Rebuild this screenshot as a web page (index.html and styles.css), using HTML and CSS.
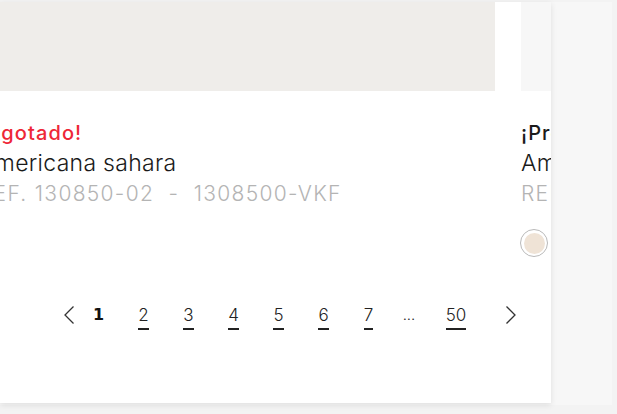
FILE: index.html
```html
<!DOCTYPE html>
<html lang="es">
<head>
<meta charset="utf-8">
<title>Productos</title>
<link rel="stylesheet" href="styles.css">
</head>
<body>
<div class="frame">
  <section class="viewport">
    <div class="track">
      <article class="card">
        <div class="media media-a"></div>
        <div class="info">
          <p class="status status-out">¡Agotado!</p>
          <p class="name">Americana sahara</p>
          <p class="ref">REF. 130850-02 &nbsp;- &nbsp;1308500-VKF</p>
        </div>
      </article>
      <article class="card">
        <div class="media media-b"></div>
        <div class="info">
          <p class="status">¡Promoción!</p>
          <p class="name">Americana natural</p>
          <p class="ref">REF. 130851-01</p>
          <span class="swatch"><span class="swatch-fill"></span></span>
        </div>
      </article>
    </div>
    <nav class="pager">
      <a class="pg-arrow" href="#" aria-label="Anterior">
        <svg width="12" height="20" viewBox="0 0 12 20"><polyline points="10.5,1.5 2,10 10.5,18.5" fill="none" stroke="#333" stroke-width="1.3"/></svg>
      </a>
      <span class="pg pg-current">1</span>
      <a class="pg" href="#"><span class="pg-num">2</span></a>
      <a class="pg" href="#"><span class="pg-num">3</span></a>
      <a class="pg" href="#"><span class="pg-num">4</span></a>
      <a class="pg" href="#"><span class="pg-num">5</span></a>
      <a class="pg" href="#"><span class="pg-num">6</span></a>
      <a class="pg" href="#"><span class="pg-num">7</span></a>
      <span class="pg pg-dots">...</span>
      <a class="pg pg-wide" href="#"><span class="pg-num">50</span></a>
      <a class="pg-arrow pg-next" href="#" aria-label="Siguiente">
        <svg width="12" height="20" viewBox="0 0 12 20"><polyline points="1.5,1.5 10,10 1.5,18.5" fill="none" stroke="#333" stroke-width="1.3"/></svg>
      </a>
    </nav>
  </section>
</div>
</body>
</html>
```

FILE: styles.css
```css
* { box-sizing: border-box; }
html, body { margin: 0; padding: 0; }
body {
  background: #f3f3f3;
  font-family: Inter, "Noto Sans", sans-serif;
  color: #222;
  width: 617px;
  height: 414px;
  overflow: hidden;
}
.frame {
  margin-top: 2px;
  width: 612px;
  height: 403px;
  background: #f7f7f7;
}
.viewport {
  width: 551px;
  height: 401px;
  background: #fff;
  overflow: hidden;
  box-shadow: 0 2px 6px rgba(0,0,0,0.10);
}
.track {
  display: flex;
  gap: 26px;
  margin-left: -21px;
}
.card {
  flex: 0 0 516px;
}
.media {
  height: 89px;
}
.media-a { background: #efedea; }
.media-b { background: #f7f7f7; }
.info {
  padding-top: 29px;
}
.info p { margin: 0; white-space: nowrap; }
.status {
  font-size: 20px;
  line-height: 26px;
  font-weight: 500;
  color: #1a1a1a;
  letter-spacing: 1.1px;
}
.status-out { color: #ee2737; }
.name {
  margin-top: 3px !important;
  font-size: 23px;
  line-height: 28px;
  font-weight: 300;
  color: #1a1a1a;
  letter-spacing: 0.3px;
}
.ref {
  margin-top: 3px !important;
  font-size: 21px;
  line-height: 28px;
  font-weight: 300;
  color: #b4b4b4;
  letter-spacing: 1.3px;
}
.swatch {
  display: inline-flex;
  align-items: center;
  justify-content: center;
  margin-top: 21px;
  width: 28px;
  height: 28px;
  border: 1px solid #b9b9b9;
  border-radius: 50%;
  background: #fff;
  margin-left: -1px;
}
.swatch-fill {
  width: 21px;
  height: 21px;
  border-radius: 50%;
  background: #efe3d6;
}
.pager {
  display: flex;
  align-items: center;
  margin-top: 44px;
  padding-left: 62px;
  height: 26px;
}
.pager a { color: #222; text-decoration: none; }
.pg-arrow {
  display: flex;
  width: 14px;
  justify-content: center;
}
.pg {
  width: 45px;
  text-align: center;
  font-size: 17px;
  font-weight: 300;
  line-height: 20px;
}
.pg-current {
  font-family: "DejaVu Sans", sans-serif;
  font-weight: 700;
  font-size: 16px;
  color: #111;
}
.pg-num {
  display: inline-block;
  padding-bottom: 4px;
  border-bottom: 2px solid #222;
  line-height: 18px;
  position: relative;
  top: 3px;
}
.pg-dots { width: 36px; font-size: 15px; }
.pg-wide { width: 58px; }
.pg-next { margin-left: 19px; }
```
